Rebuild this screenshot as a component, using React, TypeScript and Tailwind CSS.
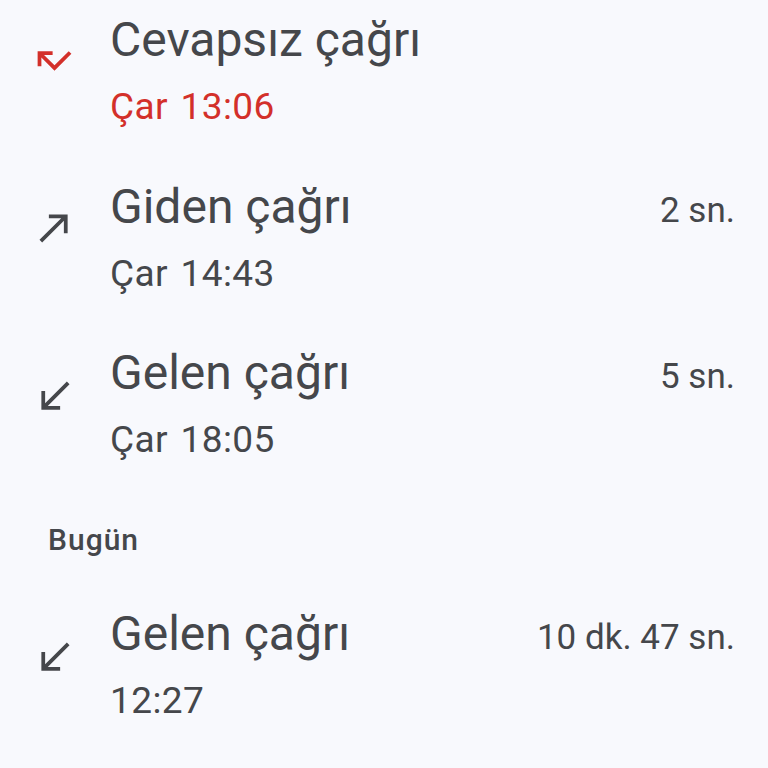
const font = { fontFamily: "Roboto, 'Noto Sans', sans-serif" };

type Kind = "missed" | "out" | "in";

const CallIcon = ({ kind }: { kind: Kind }) => {
  if (kind === "missed") {
    return (
      <svg viewBox="0 0 24 24" className="w-[45px] h-[45px] fill-[#d3302a]">
        <path d="M19.59 7L12 14.59 6.41 9H11V7H3v8h2v-4.59l7 7 9-9z" />
      </svg>
    );
  }
  if (kind === "out") {
    return (
      <svg viewBox="0 0 24 24" className="w-[45px] h-[45px] fill-[#45474b]">
        <path d="M9 5v2h6.59L4 18.59 5.41 20 17 8.41V15h2V5z" />
      </svg>
    );
  }
  return (
    <svg viewBox="0 0 24 24" className="w-[45px] h-[45px] mt-[3px] fill-[#45474b]">
      <path d="M20 5.41L18.59 4 7 15.59V9H5v10h10v-2H8.41z" />
    </svg>
  );
};

const CallRow = ({
  kind,
  title,
  time,
  duration,
}: {
  kind: Kind;
  title: string;
  time: string;
  duration?: string;
}) => (
  <div className="flex items-start">
    <div className="w-[110px] pl-[32px] pt-[26px] shrink-0">
      <CallIcon kind={kind} />
    </div>
    <div className="flex-1 flex flex-col">
      <div className="text-[48px] leading-[56px] text-[#45474b]">{title}</div>
      <div
        className={
          "text-[37px] leading-[44px] mt-[17px] tracking-[0.4px] [word-spacing:3px] " +
          (kind === "missed" ? "text-[#d3302a]" : "text-[#45474b]")
        }
      >
        {time}
      </div>
    </div>
    {duration && (
      <div className="pr-[33px] pt-[10px] text-[35px] leading-[44px] text-[#45474b]">
        {duration}
      </div>
    )}
  </div>
);

export default function App() {
  return (
    <div className="w-[768px] h-[768px] overflow-hidden bg-[#f8f9fd]" style={font}>
      <div className="flex flex-col pt-[12px]">
        <CallRow kind="missed" title="Cevapsız çağrı" time="Çar 13:06" />
        <div className="mt-[50px]">
          <CallRow kind="out" title="Giden çağrı" time="Çar 14:43" duration="2 sn." />
        </div>
        <div className="mt-[49px]">
          <CallRow kind="in" title="Gelen çağrı" time="Çar 18:05" duration="5 sn." />
        </div>
        <div className="mt-[60px] pl-[48px] text-[30px] leading-[36px] font-medium tracking-[1px] text-[#45474b]">
          Bugün
        </div>
        <div className="mt-[48px]">
          <CallRow kind="in" title="Gelen çağrı" time="12:27" duration="10 dk. 47 sn." />
        </div>
      </div>
    </div>
  );
}
